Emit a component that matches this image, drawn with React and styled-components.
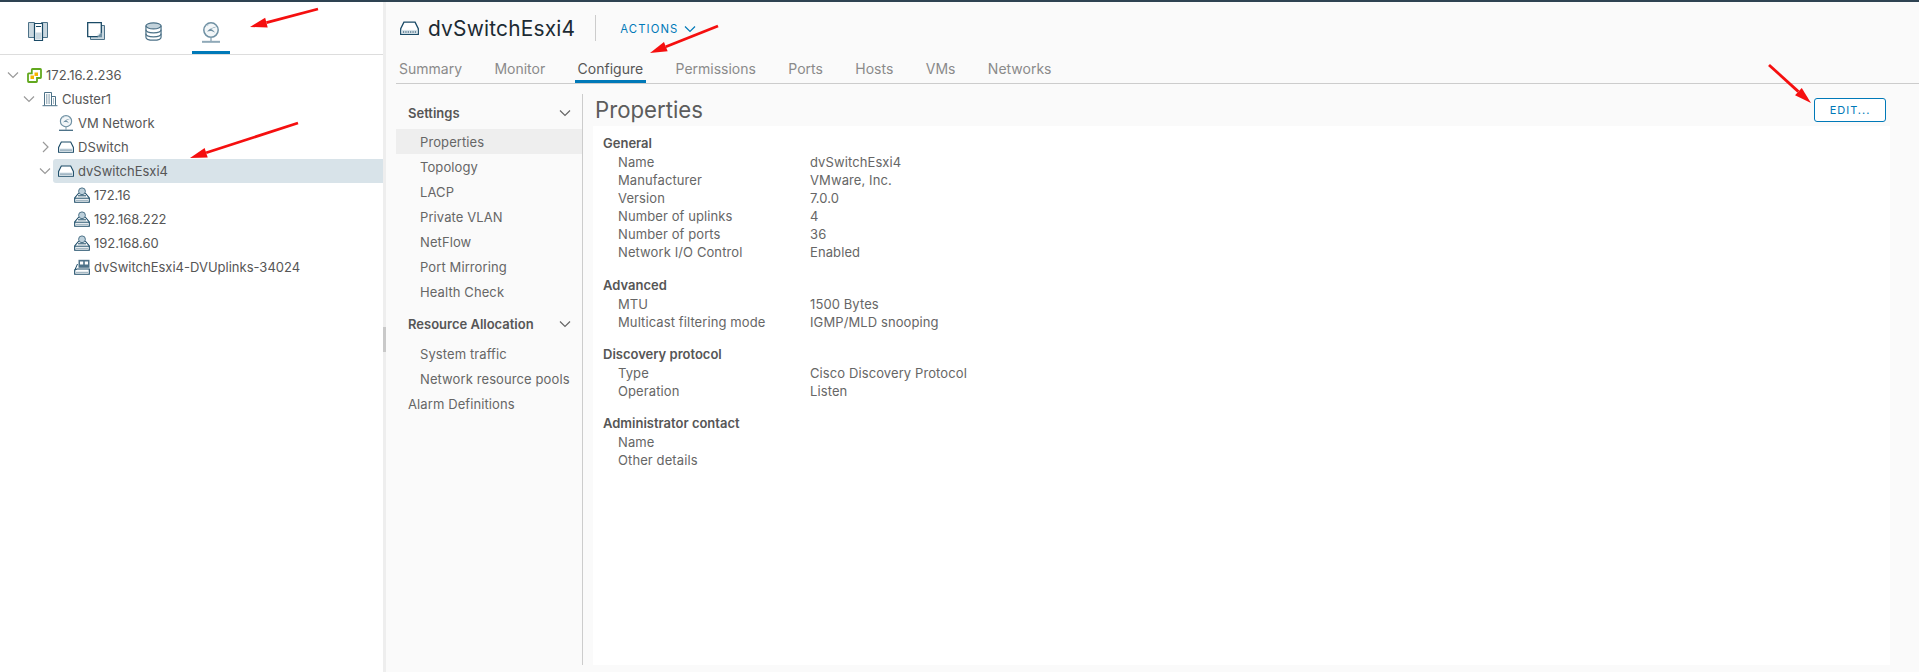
import React from "react";
import styled, { createGlobalStyle } from "styled-components";

const Global = createGlobalStyle`
  html, body { margin: 0; padding: 0; height: 100%; background: #fff; }
  body { font-family: Inter, "Open Sans", "Liberation Sans", sans-serif; color: #565656; overflow: hidden; }
  #root { height: 672px; }
`;

const Page = styled.div`
  position: relative;
  width: 1919px;
  height: 672px;
  display: flex;
  flex-direction: column;
  overflow: hidden;
`;
const TopStrip = styled.div`height: 2px; background: #2e4352; flex: none;`;
const Body = styled.div`flex: 1; display: flex; min-height: 0;`;

const LeftPanel = styled.aside`width: 383px; flex: none; background: #fff; display: flex; flex-direction: column;`;
const IconTabs = styled.div`
  height: 52px; flex: none; display: flex; padding-left: 19px; gap: 19.5px;
  border-bottom: 1px solid #ddd; box-sizing: content-box;
`;
const IconTab = styled.div`
  width: 38px; height: 52px; box-sizing: border-box; display: flex; align-items: flex-start; justify-content: center;
  padding-top: 20px;
  border-bottom: 3px solid ${p => (p.$active ? "#0079b8" : "transparent")};
`;
const Tree = styled.div`padding-top: 8px; display: flex; flex-direction: column;`;
const TreeRow = styled.div`
  height: 24px; display: flex; align-items: center; font-size: 13px; color: #565656;
  padding-left: ${p => p.$indent}px;
`;
const Caret = styled.span`width: 17px; height: 24px; flex: none; display: flex; align-items: center; justify-content: center;`;
const CaretGap = styled.span`width: 17px; flex: none;`;
const Label = styled.span`
  flex: 1; height: 24px; display: flex; align-items: center; gap: 4px; padding-left: 5px; border-radius: 3px 0 0 3px;
  background: ${p => (p.$selected ? "#d8e3e9" : "transparent")};
`;
const IconSlot = styled.span`width: 16px; height: 16px; flex: none; display: flex; align-items: center; justify-content: center;`;

const Splitter = styled.div`width: 3px; flex: none; background: #eee; display: flex; align-items: flex-start; padding-top: 325px; box-sizing: border-box;`;
const Grip = styled.div`width: 3px; height: 25px; background: #c9c9c9;`;

const Main = styled.main`flex: 1; min-width: 0; background: #fafafa; display: flex; flex-direction: column; padding-bottom: 7px; box-sizing: border-box;`;
const Header = styled.header`height: 52px; flex: none; display: flex; align-items: center; padding: 4px 0 4px 14px; box-sizing: border-box;`;
const Title = styled.h1`margin: 0 0 0 9px; font-size: 20.9px; font-weight: 400; color: #1c2a33; letter-spacing: .2px;`;
const Divider = styled.span`width: 1px; height: 26px; background: #ccc; margin: 0 24px 0 20px;`;
const Actions = styled.span`font-size: 11.3px; color: #0079b8; letter-spacing: 1.1px; display: flex; align-items: center; gap: 6px; margin-top: 2px;`;

const Tabs = styled.nav`height: 29px; flex: none; display: flex; margin-left: 10px; border-bottom: 1px solid #ccc; gap: 26.4px;`;
const Tab = styled.div`
  height: 29px; box-sizing: border-box; display: flex; align-items: center; font-size: 14px; padding: 2px 3px 0;
  color: ${p => (p.$active ? "#565656" : "#8a8a8a")};
  border-bottom: 3px solid ${p => (p.$active ? "#0079b8" : "transparent")};
`;

const Lower = styled.div`flex: 1; min-height: 0; display: flex; padding: 10px 0 0 10px;`;
const SideNav = styled.div`width: 187px; flex: none; border-right: 1px solid #ccc; display: flex; flex-direction: column; padding-top: 2px; box-sizing: border-box;`;
const SideHead = styled.div`
  height: 33px; flex: none; display: flex; align-items: center; justify-content: space-between; padding: 0 11px 0 12px;
  font-size: 13px; font-weight: 600; color: #565656; margin: ${p => p.$mt || 0}px 0 ${p => (p.$mt ? 1 : 0)}px;
`;
const SideItem = styled.div`
  height: 25px; flex: none; display: flex; align-items: center; font-size: 13px; letter-spacing: .1px;
  padding-left: ${p => (p.$top ? 12 : 24)}px; color: #666;
  background: ${p => (p.$active ? "#eee" : "transparent")};
`;

const Content = styled.section`flex: 1; min-width: 0; display: flex; flex-direction: column; padding: 0 29px 0 10px;`;
const ContentHead = styled.div`height: 32px; flex: none; display: flex; align-items: flex-start; justify-content: space-between; padding-left: 2px;`;
const H2 = styled.h2`margin: 2px 0 0; font-size: 22.2px; font-weight: 400; color: #5c5c5c; line-height: 28px;`;
const EditButton = styled.button`
  width: 72px; height: 24px; margin: 4px 4px 0 0; padding: 0; border: 1px solid #0079b8; border-radius: 3px; background: #fff;
  color: #0079b8; font: 400 11px Inter, sans-serif; letter-spacing: 1px;
`;
const Panel = styled.div`flex: 1; background: #fff; padding: 8px 10px;`;
const Group = styled.div`
  margin-bottom: 14px;
  &:first-child { margin-bottom: 15px; }
`;
const GroupTitle = styled.div`height: 19px; line-height: 18px; font-size: 13px; font-weight: 600; color: #565656;`;
const Row = styled.div`height: 18px; line-height: 18px; display: grid; grid-template-columns: 192px 1fr; padding-left: 15px; font-size: 13px; letter-spacing: .1px; color: #666;`;

const C = "#4d7288", D = "#1a4a66";

const Chev = ({ right, color = "#9a9a9a", size = 12 }) => (
  <svg width={size} height={size} viewBox="0 0 12 12" fill="none" stroke={color} strokeWidth="1.2">
    {right ? <path d="M4 1 9 6l-5 5" /> : <path d="M1 3.5 6 8.5l5-5" />}
  </svg>
);
const HostsIcon = () => (
  <svg width="20" height="20" viewBox="0 0 20 20" fill="none">
    <path d="M.5.5h6v15h-6zM13.5.5h6v15h-6z" fill="#c9d7df" stroke={C} />
    <path d="M6.5 1.5h8v17h-8z" fill="#fff" stroke={D} strokeWidth="1.2" />
    <path d="M8 4.5h5" stroke={D} />
    <path d="M7.5 10.5h6v7h-6z" fill="#c9d7df" />
  </svg>
);
const NoteIcon = () => (
  <svg width="18" height="18" viewBox="0 0 18 18" fill="none">
    <path d="M3.5 3.5h14v14h-14z" fill="#c9d7df" stroke={C} />
    <path d="M.7.7h13.6v10.2l-3.8 3.8H.7z" fill="#fff" stroke={D} strokeWidth="1.3" />
    <path d="M15 10.6v4.6h-4.8z" fill="#6f90a3" />
    <path d="M14.2 11 10.6 14.6V11.6z" fill="#e6eef2" />
  </svg>
);
const DbIcon = () => (
  <svg width="17" height="19" viewBox="0 0 18 20" fill="none" stroke={C} strokeWidth="1.3">
    <ellipse cx="9" cy="4" rx="8" ry="3.2" fill="#c2d2db" />
    <path d="M1 4v12c0 1.8 3.6 3.2 8 3.2s8-1.4 8-3.2V4" />
    <path d="M1 8.2c0 1.8 3.6 3.2 8 3.2s8-1.4 8-3.2M1 12.4c0 1.8 3.6 3.2 8 3.2s8-1.4 8-3.2" />
  </svg>
);
const GlobeIcon = ({ size = 18, base = "#8fa9b8" }) => (
  <svg width={size} height={size * 1.17} viewBox="0 0 18 21" fill="none">
    <circle cx="9" cy="8" r="7.2" fill="#f2f6f8" stroke="#6f90a3" strokeWidth="1.5" />
    <path d="M15.5 4.5C12 5 8 6 5 9.5c2.5-.8 5.5-1 8 1.2-1.6-2.4-2.6-3-4-3.6 2-1.2 4.5-1.8 6.5-2.6z" fill="#6f90a3" />
    <path d="M3.5 4C4.5 3 6 2.3 7.5 2.2 6.5 3.5 5 4.3 3.5 4z" fill="#b5c8d3" />
    <path d="M9 15.5V19" stroke="#8fa9b8" strokeWidth="1.4" />
    <path d="M0 19.8h18" stroke={base} strokeWidth="2" />
  </svg>
);
const VCenterIcon = () => (
  <svg width="15" height="15" viewBox="0 0 15 15" fill="none">
    <path d="M5.5 1h7.8c.4 0 .7.3.7.7v7.6c0 .4-.3.7-.7.7H10v3.3c0 .4-.3.7-.7.7H1.7c-.4 0-.7-.3-.7-.7V6c0-.4.3-.7.7-.7H4.8V1.7c0-.4.3-.7.7-.7z" stroke="#62a81e" strokeWidth="1.8" />
    <path d="M7.5 4.5h3.5v3.5H7.5zM3.5 7.5H7V11H3.5z" fill="#f5b400" />
  </svg>
);
const ClusterIcon = () => (
  <svg width="16" height="16" viewBox="0 0 16 16" fill="none" stroke={C}>
    <path d="M2.5 14.5V1.5h7v13M9.5 5.5h4v9M.5 14.7h15" />
    <path d="M4 4h4M4 6h4M4 8h4M4 10h4M4 12h4M11 8h1.5M11 10h1.5M11 12h1.5" strokeDasharray="1 .6" />
  </svg>
);
const SwitchIcon = ({ size = 16 }) => (
  <svg width={size} height={size * .75} viewBox="0 0 16 12" fill="none">
    <path d="M3.3 1h9.4L15.4 6.5v4.8H.6V6.5z" fill="#fff" stroke={D} strokeWidth="1.1" />
    <path d="M1.2 7.5h13.6v3.2H1.2z" fill="#d5e1e8" />
    <path d="M2.5 9.2h11" stroke={C} strokeWidth="1.2" strokeDasharray="1 1" />
  </svg>
);
const PortGroupIcon = () => (
  <svg width="16" height="16" viewBox="0 0 16 16" fill="none">
    <path d="M4.8 6 .7 11v4.3h14.6V11L11.2 6" stroke={D} fill="#fff" strokeWidth="1.1" />
    <circle cx="8" cy="4.3" r="3.4" fill="#bdd0db" stroke={C} />
    <path d="M4 8.8h8" stroke={D} />
    <path d="M.8 11.2h14.4" stroke={D} />
    <path d="M2.5 13.3h11" stroke={C} strokeWidth="1.3" strokeDasharray="1 1" />
  </svg>
);
const UplinkIcon = () => (
  <svg width="16" height="16" viewBox="0 0 16 16" fill="none">
    <path d="M.8 11 3.5 5" stroke={D} />
    <path d="M4.5.8h11v8h-11z" fill={C} />
    <path d="M6 2.5h3.2v3H6zM10.8 2.5H14v3h-3.2z" fill="#fff" />
    <path d="M.7 11v4.3h14.6V10H3z" stroke={D} fill="#fff" strokeWidth="1.1" />
    <path d="M2.5 13.3h11" stroke={C} strokeWidth="1.3" strokeDasharray="1 1" />
  </svg>
);
const Arrow = ({ x1, y1, x2, y2 }) => {
  const a = Math.atan2(y2 - y1, x2 - x1), L = 17, W = 5;
  const bx = x2 - L * Math.cos(a), by = y2 - L * Math.sin(a);
  const nx = -Math.sin(a) * W, ny = Math.cos(a) * W;
  return (
    <g>
      <line x1={x1} y1={y1} x2={bx} y2={by} stroke="#f50f0f" strokeWidth="2.8" />
      <polygon points={`${x2},${y2} ${bx + nx},${by + ny} ${bx - nx},${by - ny}`} fill="#f50f0f" />
    </g>
  );
};
const Overlay = styled.svg`position: absolute; left: 0; top: 0; pointer-events: none;`;

const tree = [
  { indent: 4, caret: "down", icon: <VCenterIcon />, text: "172.16.2.236" },
  { indent: 20, caret: "down", icon: <ClusterIcon />, text: "Cluster1" },
  { indent: 36, icon: <GlobeIcon size={14} base={C} />, text: "VM Network" },
  { indent: 36, caret: "right", icon: <SwitchIcon />, text: "DSwitch" },
  { indent: 36, caret: "down", icon: <SwitchIcon />, text: "dvSwitchEsxi4", selected: true },
  { indent: 52, icon: <PortGroupIcon />, text: "172.16" },
  { indent: 52, icon: <PortGroupIcon />, text: "192.168.222" },
  { indent: 52, icon: <PortGroupIcon />, text: "192.168.60" },
  { indent: 52, icon: <UplinkIcon />, text: "dvSwitchEsxi4-DVUplinks-34024" },
];
const tabs = ["Summary", "Monitor", "Configure", "Permissions", "Ports", "Hosts", "VMs", "Networks"];
const groups = [
  ["General", [["Name", "dvSwitchEsxi4"], ["Manufacturer", "VMware, Inc."], ["Version", "7.0.0"], ["Number of uplinks", "4"], ["Number of ports", "36"], ["Network I/O Control", "Enabled"]]],
  ["Advanced", [["MTU", "1500 Bytes"], ["Multicast filtering mode", "IGMP/MLD snooping"]]],
  ["Discovery protocol", [["Type", "Cisco Discovery Protocol"], ["Operation", "Listen"]]],
  ["Administrator contact", [["Name", ""], ["Other details", ""]]],
];

export default function App() {
  return (
    <Page>
      <Global />
      <TopStrip />
      <Body>
        <LeftPanel>
          <IconTabs>
            <IconTab><HostsIcon /></IconTab>
            <IconTab><NoteIcon /></IconTab>
            <IconTab><DbIcon /></IconTab>
            <IconTab $active><GlobeIcon /></IconTab>
          </IconTabs>
          <Tree>
            {tree.map(t => (
              <TreeRow key={t.text} $indent={t.indent}>
                {t.caret ? <Caret><Chev right={t.caret === "right"} /></Caret> : <CaretGap />}
                <Label $selected={t.selected}><IconSlot>{t.icon}</IconSlot>{t.text}</Label>
              </TreeRow>
            ))}
          </Tree>
        </LeftPanel>
        <Splitter><Grip /></Splitter>
        <Main>
          <Header>
            <SwitchIcon size={19} />
            <Title>dvSwitchEsxi4</Title>
            <Divider />
            <Actions>ACTIONS <Chev color="#0079b8" /></Actions>
          </Header>
          <Tabs>
            {tabs.map(t => <Tab key={t} $active={t === "Configure"}>{t}</Tab>)}
          </Tabs>
          <Lower>
            <SideNav>
              <SideHead>Settings <Chev color="#666" /></SideHead>
              <SideItem $active>Properties</SideItem>
              <SideItem>Topology</SideItem>
              <SideItem>LACP</SideItem>
              <SideItem>Private VLAN</SideItem>
              <SideItem>NetFlow</SideItem>
              <SideItem>Port Mirroring</SideItem>
              <SideItem>Health Check</SideItem>
              <SideHead $mt={3}>Resource Allocation <Chev color="#666" /></SideHead>
              <SideItem>System traffic</SideItem>
              <SideItem>Network resource pools</SideItem>
              <SideItem $top>Alarm Definitions</SideItem>
            </SideNav>
            <Content>
              <ContentHead>
                <H2>Properties</H2>
                <EditButton>EDIT...</EditButton>
              </ContentHead>
              <Panel>
                {groups.map(([title, rows]) => (
                  <Group key={title}>
                    <GroupTitle>{title}</GroupTitle>
                    {rows.map(([k, v]) => <Row key={k}><span>{k}</span><span>{v}</span></Row>)}
                  </Group>
                ))}
              </Panel>
            </Content>
          </Lower>
        </Main>
      </Body>
      <Overlay width="1919" height="672">
        <Arrow x1={318} y1={9} x2={250} y2={27} />
        <Arrow x1={298} y1={123} x2={190} y2={158} />
        <Arrow x1={718} y1={26} x2={650} y2={53} />
        <Arrow x1={1769} y1={65} x2={1811} y2={103} />
      </Overlay>
    </Page>
  );
}
